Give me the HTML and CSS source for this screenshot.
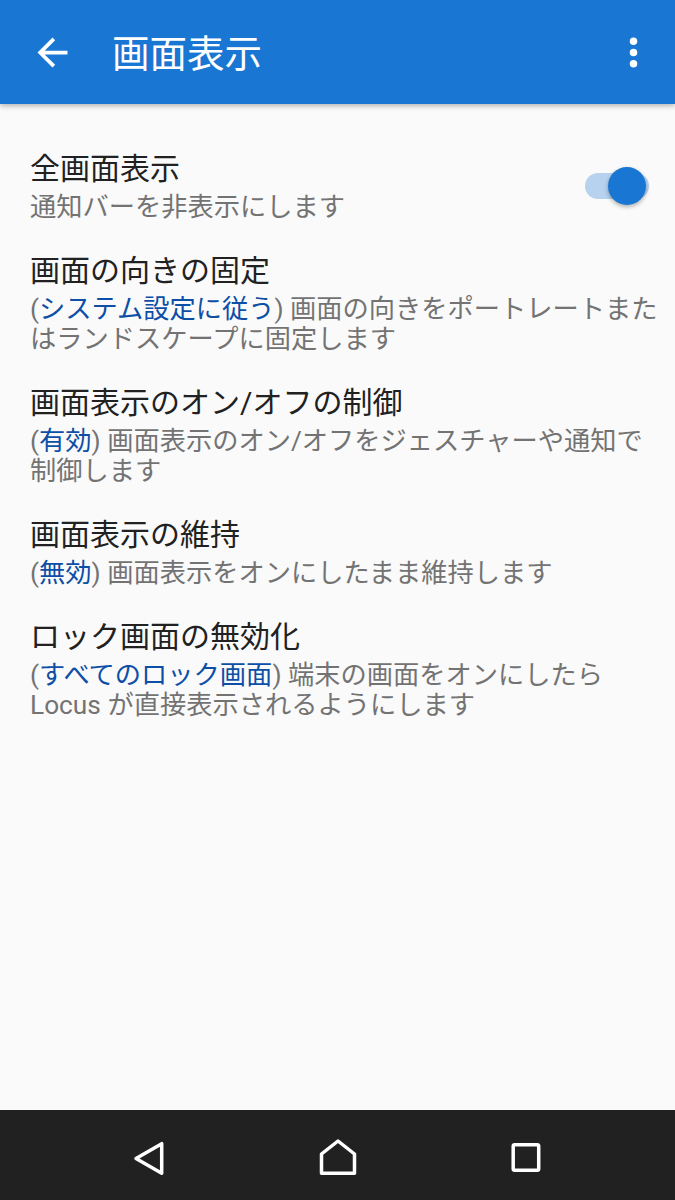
FILE: index.html
```html
<!DOCTYPE html>
<html lang="ja">
<head>
    <meta charset="UTF-8">
    <meta name="viewport" content="width=device-width, initial-scale=1.0">
    <title>画面表示</title>
    <link rel="stylesheet" href="styles.css">
</head>
<body>
    <header class="appbar">
        <svg class="appbar-icon" viewBox="0 0 24 24">
            <path d="M20 11H7.83l5.59-5.59L12 4l-8 8 8 8 1.41-1.41L7.83 13H20v-2z"/>
        </svg>
        <h1 class="appbar-title">画面表示</h1>
        <svg class="appbar-icon appbar-menu" viewBox="0 0 24 24">
            <circle cx="12" cy="6" r="2"/>
            <circle cx="12" cy="12" r="2"/>
            <circle cx="12" cy="18" r="2"/>
        </svg>
    </header>

    <main class="prefs">
        <div class="pref">
            <div class="pref-text">
                <div class="pref-title">全画面表示</div>
                <div class="pref-summary">通知バーを非表示にします</div>
            </div>
            <div class="switch">
                <div class="switch-thumb"></div>
            </div>
        </div>
        <div class="pref">
            <div class="pref-text">
                <div class="pref-title">画面の向きの固定</div>
                <div class="pref-summary">(<span class="value">システム設定に従う</span>) 画面の向きをポートレートまたはランドスケープに固定します</div>
            </div>
        </div>
        <div class="pref">
            <div class="pref-text">
                <div class="pref-title">画面表示のオン/オフの制御</div>
                <div class="pref-summary">(<span class="value">有効</span>) 画面表示のオン/オフをジェスチャーや通知で制御します</div>
            </div>
        </div>
        <div class="pref">
            <div class="pref-text">
                <div class="pref-title">画面表示の維持</div>
                <div class="pref-summary">(<span class="value">無効</span>) 画面表示をオンにしたまま維持します</div>
            </div>
        </div>
        <div class="pref">
            <div class="pref-text">
                <div class="pref-title">ロック画面の無効化</div>
                <div class="pref-summary">(<span class="value">すべてのロック画面</span>) 端末の画面をオンにしたら Locus が直接表示されるようにします</div>
            </div>
        </div>
    </main>

    <nav class="navbar">
        <div class="nav-btn">
            <svg viewBox="0 0 48 48"><polygon points="10,25.5 35.7,10.7 35.7,40.3"/></svg>
        </div>
        <div class="nav-btn">
            <svg viewBox="0 0 48 48"><polygon points="24,8 40.5,21 40.5,40.2 7.5,40.2 7.5,21"/></svg>
        </div>
        <div class="nav-btn">
            <svg viewBox="0 0 48 48"><rect x="11.2" y="11.7" width="25.5" height="25.5" rx="1.5"/></svg>
        </div>
    </nav>
</body>
</html>
```

FILE: styles.css
```css
body {
    font-family: Roboto, "Noto Sans CJK JP", sans-serif;
    background-color: #fafafa;
    margin: 0;
    height: 1200px;
    display: flex;
    flex-direction: column;
}
.appbar {
    position: relative;
    z-index: 1;
    height: 104px;
    flex-shrink: 0;
    display: flex;
    align-items: center;
    padding: 0 19px 0 30px;
    background-color: #1976d2;
    box-shadow: 0 2px 5px rgba(0, 0, 0, 0.28);
}
.appbar-icon {
    width: 45px;
    height: 45px;
    fill: #fff;
    flex-shrink: 0;
}
.appbar-title {
    margin: 0 0 0 37px;
    padding-top: 4px;
    font-size: 37.5px;
    font-weight: normal;
    line-height: 48px;
    color: #fff;
}
.appbar-menu {
    margin-left: auto;
}
.prefs {
    flex: 1;
    padding-top: 31px;
}
.pref {
    display: flex;
    align-items: center;
    padding: 14px 11px 15px 30px;
}
.pref-text {
    flex: 1;
}
.pref-title {
    font-size: 30px;
    line-height: 40px;
    color: #212121;
}
.pref-summary {
    margin-top: 3px;
    font-size: 26.25px;
    line-height: 30px;
    color: #737373;
}
.value {
    color: #0d4ea6;
}
.switch {
    position: relative;
    width: 64px;
    height: 38px;
    margin-right: 15px;
    flex-shrink: 0;
}
.switch::before {
    content: "";
    position: absolute;
    left: 0;
    right: 0;
    top: 6px;
    height: 26px;
    border-radius: 13px;
    background-color: #b6d2ef;
}
.switch-thumb {
    position: absolute;
    right: 3px;
    top: 0;
    width: 38px;
    height: 38px;
    border-radius: 50%;
    background-color: #1976d2;
    box-shadow: 0 2px 4px rgba(0, 0, 0, 0.3);
}
.navbar {
    height: 90px;
    flex-shrink: 0;
    display: flex;
    justify-content: center;
    align-items: center;
    background-color: #212121;
}
.nav-btn {
    width: 188px;
    display: flex;
    justify-content: center;
    padding-top: 4px;
}
.nav-btn svg {
    width: 48px;
    height: 48px;
    fill: none;
    stroke: #fff;
    stroke-width: 3.5;
    stroke-linejoin: round;
}
```
